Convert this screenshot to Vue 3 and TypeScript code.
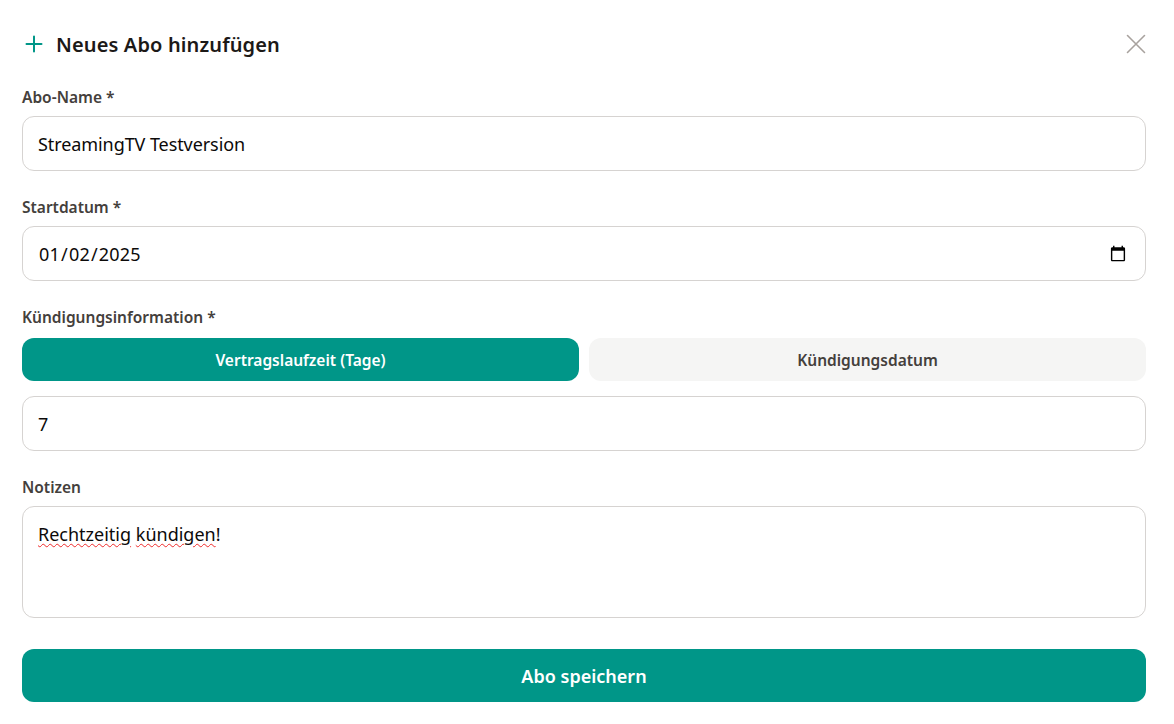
<template>
  <form class="modal" @submit.prevent>
    <header class="modal__header">
      <h2 class="modal__title">
        <svg class="modal__plus" width="24" height="24" viewBox="0 0 24 24" fill="none" stroke="currentColor" stroke-width="2" stroke-linecap="round">
          <path d="M12 4.5v15M4.5 12h15" />
        </svg>
        Neues Abo hinzufügen
      </h2>
      <button type="button" class="modal__close" aria-label="Schließen">
        <svg width="24" height="24" viewBox="0 0 24 24" fill="none" stroke="currentColor" stroke-width="1.6" stroke-linecap="round">
          <path d="M3.5 3.5l17 17M20.5 3.5l-17 17" />
        </svg>
      </button>
    </header>

    <label class="field">
      <span class="field__label">Abo-Name *</span>
      <input v-model="name" class="field__input" type="text" />
    </label>

    <label class="field">
      <span class="field__label">Startdatum *</span>
      <input v-model="startDate" class="field__input field__input--date" type="date" />
    </label>

    <div class="field">
      <span class="field__label field__label--tabs">Kündigungsinformation *</span>
      <div class="tabs">
        <button
          v-for="tab in tabs"
          :key="tab"
          type="button"
          class="tabs__item"
          :class="{ 'tabs__item--active': tab === activeTab }"
          @click="activeTab = tab"
        >
          {{ tab }}
        </button>
      </div>
      <input v-model="days" class="field__input" type="text" />
    </div>

    <div class="field">
      <span class="field__label">Notizen</span>
      <div class="field__input field__input--notes" role="textbox">
        <span class="misspelled">Rechtzeitig</span> <span class="misspelled">kündigen</span>!
      </div>
    </div>

    <button type="submit" class="save">Abo speichern</button>
  </form>
</template>

<script setup lang="ts">
import { ref } from 'vue'

const tabs = ['Vertragslaufzeit (Tage)', 'Kündigungsdatum']

const name = ref('StreamingTV Testversion')
const startDate = ref('2025-01-02')
const days = ref('7')
const activeTab = ref(tabs[0])
</script>

<style>
html,
body {
  background: #fff;
}
</style>

<style scoped>
.modal {
  box-sizing: border-box;
  width: 1174px;
  height: 724px;
  padding: 28px 28px 22px 22px;
  display: flex;
  flex-direction: column;
  font-family: 'Noto Sans', 'Open Sans', sans-serif;
  background: #fff;
  overflow: hidden;
}

.modal__header {
  display: flex;
  justify-content: space-between;
  align-items: center;
  height: 32px;
  margin-bottom: 27px;
}

.modal__title {
  display: flex;
  align-items: center;
  gap: 10px;
  margin: 0;
  font-size: 20px;
  font-weight: 600;
  letter-spacing: 0.13px;
  color: #1c1917;
}

.modal__plus {
  color: #009688;
}

.modal__close {
  display: flex;
  margin-right: -2px;
  padding: 0;
  border: none;
  background: none;
  color: #a8a29e;
}

.field {
  display: flex;
  flex-direction: column;
  margin-bottom: 26px;
}

.field__label {
  height: 20px;
  margin-bottom: 9px;
  font-size: 15.5px;
  line-height: 20px;
  font-weight: 600;
  color: #44403c;
}

.field__label--tabs {
  margin-bottom: 11px;
}

.field__input {
  box-sizing: border-box;
  width: 100%;
  height: 55px;
  padding: 0 15px;
  border: 1px solid #d6d3d1;
  border-radius: 12px;
  outline: none;
  font-family: inherit;
  font-size: 18px;
  letter-spacing: -0.08px;
  color: #0c0a09;
  background: #fff;
}

.field__input--date {
  padding-right: 16px;
  letter-spacing: 0.2px;
}

.field__input--notes {
  height: 112px;
  padding: 15px 15px;
  line-height: 24px;
  letter-spacing: 0;
}

.misspelled {
  text-decoration: underline wavy #ee2b2b 1.4px;
  text-underline-offset: 2px;
}

.tabs {
  display: grid;
  grid-template-columns: 1fr 1fr;
  gap: 10px;
  margin-bottom: 15px;
}

.tabs__item {
  height: 43px;
  border: none;
  border-radius: 12px;
  font-family: inherit;
  font-size: 15.5px;
  font-weight: 600;
  color: #44403c;
  background: #f5f5f4;
}

.tabs__item--active {
  color: #fff;
  background: #009688;
}

.save {
  height: 53px;
  margin-top: 5px;
  border: none;
  border-radius: 12px;
  font-family: inherit;
  font-size: 18px;
  font-weight: 600;
  color: #fff;
  background: #009688;
}
</style>
